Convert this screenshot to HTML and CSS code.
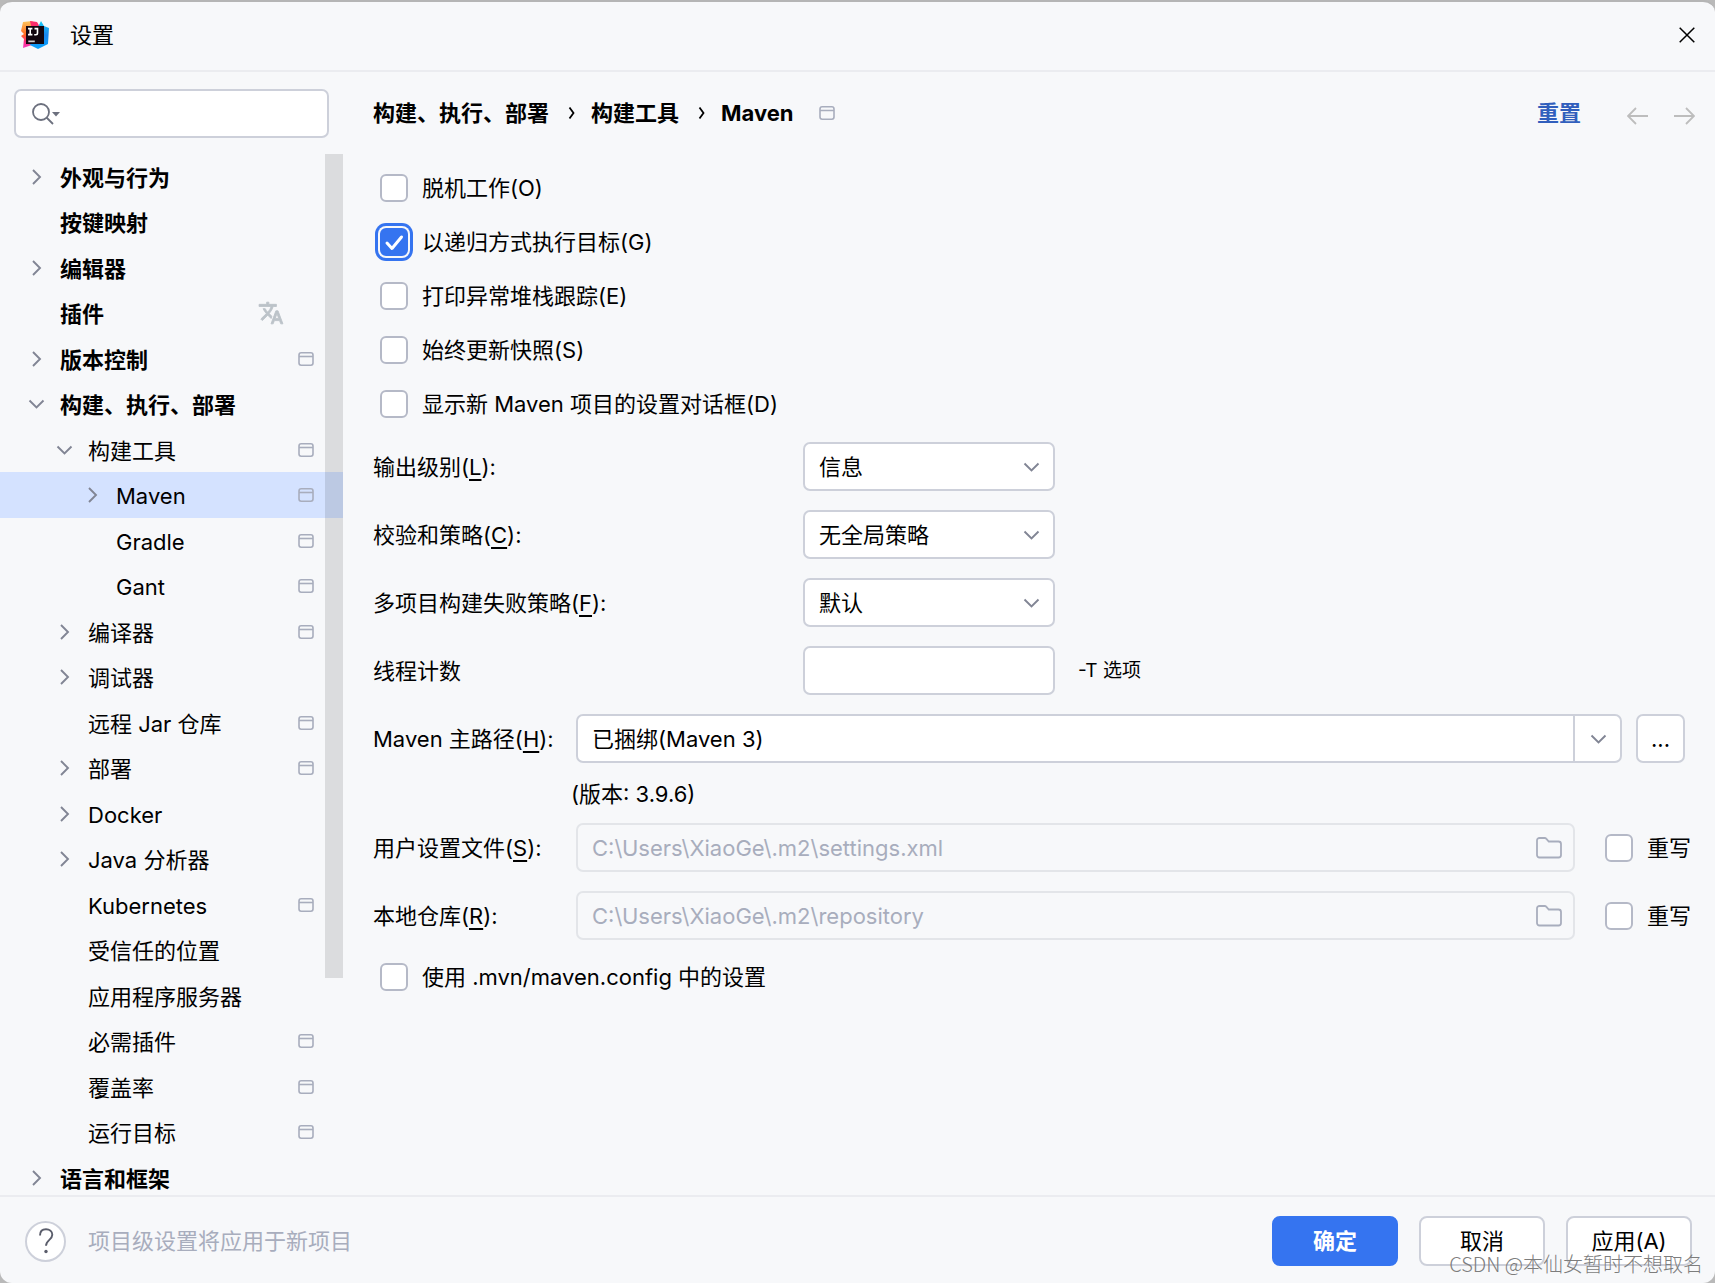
FILE: index.html
```html
<!DOCTYPE html>
<html lang="zh-CN">
<head>
<meta charset="utf-8">
<title>设置</title>
<link rel="stylesheet" href="styles.css">
</head>
<body>
<svg class="sprite" aria-hidden="true">
  <symbol id="right" viewBox="0 0 24 24"><path d="M9 5l7 7-7 7" fill="none" stroke="currentColor" stroke-width="1.900"/></symbol>
  <symbol id="down" viewBox="0 0 24 24"><path d="M5.500 8.500l7 7 7-7" fill="none" stroke="currentColor" stroke-width="1.900"/></symbol>
  <symbol id="project" viewBox="0 0 16 16"><rect x="1" y="1.700" width="14" height="12.600" rx="2.200" fill="none" stroke="currentColor" stroke-width="1.600"/><path d="M1 5.500h14" stroke="currentColor" stroke-width="1.600"/></symbol>
  <symbol id="folder" viewBox="0 0 26 22"><path d="M1 3.500a2.500 2.500 0 0 1 2.500-2.500h5.200a2 2 0 0 1 1.500.700L12.800 4.500h9.700A2.500 2.500 0 0 1 25 7v11a2.500 2.500 0 0 1-2.500 2.500h-19A2.500 2.500 0 0 1 1 18z" fill="none" stroke="currentColor" stroke-width="1.800"/></symbol>
  <symbol id="crumb" viewBox="0 0 8 14"><path d="M1.500 1.500l4 5.500-4 5.500" fill="none" stroke="currentColor" stroke-width="1.800"/></symbol>
</svg>
<div class="dialog">
  <header class="titlebar">
    <svg class="logo" viewBox="0 0 28 28" aria-hidden="true">
      <defs>
        <linearGradient id="warm" x1="0" y1="0" x2="0" y2="1"><stop offset="0" stop-color="#fdc65e"/><stop offset=".5" stop-color="#ff6a1f"/><stop offset=".75" stop-color="#fe2b7c"/><stop offset="1" stop-color="#f03fc0"/></linearGradient>
        <linearGradient id="cool" x1="0" y1="0" x2="0" y2="1"><stop offset="0" stop-color="#18cdf5"/><stop offset=".5" stop-color="#1a86f0"/><stop offset="1" stop-color="#08a2fb"/></linearGradient>
      </defs>
      <path d="M2 1l9-1 6 5v17L2 27l1-9-3-3 3-2-3-3z" fill="url(#warm)"/>
      <path d="M9 0l7 1 3 5-8 4z" fill="#fb2c6b"/>
      <path d="M20 0l3 5 5 2-1 16-10 5-8-4 8-18z" fill="url(#cool)"/>
      <rect x="5" y="5" width="18" height="18" fill="#12060f"/>
      <path d="M7 7.600h4.400M9.200 7.600v6M7 13.600h4.400M13.500 7.600h3v4.400q0 1.700-1.700 1.700h-1.600" fill="none" stroke="#fff" stroke-width="1.600"/>
      <path d="M7.300 20.300h6.500" stroke="#ccc" stroke-width="1.700"/>
    </svg>
    <h1 class="title">设置</h1>
    <button class="close" aria-label="关闭"><svg viewBox="0 0 16 16"><path d="M.7.700l14.600 14.600M15.300.700L.7 15.300" stroke="#000" stroke-width="1.500"/></svg></button>
  </header>

  <div class="body">
    <aside class="sidebar">
      <label class="search">
        <svg viewBox="0 0 28 22" aria-hidden="true"><circle cx="9" cy="9" r="8" fill="none" stroke="#6c707e" stroke-width="1.800"/><path d="M14.500 14.500l6.500 6.500" stroke="#6c707e" stroke-width="1.800"/><path d="M20 9h8l-4 4.500z" fill="#6c707e"/></svg>
        <input type="text" aria-label="搜索设置">
      </label>
      <nav class="tree-area" aria-label="设置分类">
        <ul class="tree">
          <li class="row top"><svg class="arrow"><use href="#right"/></svg><span class="name">外观与行为</span></li>
          <li class="row top"><span class="arrow"></span><span class="name">按键映射</span></li>
          <li class="row top"><svg class="arrow"><use href="#right"/></svg><span class="name">编辑器</span></li>
          <li class="row top"><span class="arrow"></span><span class="name">插件</span><svg class="translate" viewBox="0 0 24 24"><path d="M12.870 15.070l-2.540-2.510.03-.03A17.520 17.520 0 0 0 14.070 6H17V4h-7V2H8v2H1v1.990h11.170C11.500 7.920 10.440 9.750 9 11.350 8.070 10.320 7.300 9.190 6.690 8h-2c.73 1.630 1.730 3.170 2.980 4.560l-5.090 5.020L4 19l5-5 3.110 3.110.76-2.040zM18.500 10h-2L12 22h2l1.120-3h4.750L21 22h2l-4.500-12zm-2.620 7l1.620-4.330L19.120 17h-3.240z" fill="currentColor" stroke="currentColor" stroke-width=".8"/></svg></li>
          <li class="row top"><svg class="arrow"><use href="#right"/></svg><span class="name">版本控制</span><svg class="project"><use href="#project"/></svg></li>
          <li class="row top"><svg class="arrow"><use href="#down"/></svg><span class="name">构建、执行、部署</span></li>
          <li class="row child"><svg class="arrow"><use href="#down"/></svg><span class="name">构建工具</span><svg class="project"><use href="#project"/></svg></li>
          <li class="row leaf selected"><svg class="arrow"><use href="#right"/></svg><span class="name">Maven</span><svg class="project"><use href="#project"/></svg></li>
          <li class="row leaf"><span class="arrow"></span><span class="name">Gradle</span><svg class="project"><use href="#project"/></svg></li>
          <li class="row leaf"><span class="arrow"></span><span class="name">Gant</span><svg class="project"><use href="#project"/></svg></li>
          <li class="row child"><svg class="arrow"><use href="#right"/></svg><span class="name">编译器</span><svg class="project"><use href="#project"/></svg></li>
          <li class="row child"><svg class="arrow"><use href="#right"/></svg><span class="name">调试器</span></li>
          <li class="row child"><span class="arrow"></span><span class="name">远程 Jar 仓库</span><svg class="project"><use href="#project"/></svg></li>
          <li class="row child"><svg class="arrow"><use href="#right"/></svg><span class="name">部署</span><svg class="project"><use href="#project"/></svg></li>
          <li class="row child"><svg class="arrow"><use href="#right"/></svg><span class="name">Docker</span></li>
          <li class="row child"><svg class="arrow"><use href="#right"/></svg><span class="name">Java 分析器</span></li>
          <li class="row child"><span class="arrow"></span><span class="name">Kubernetes</span><svg class="project"><use href="#project"/></svg></li>
          <li class="row child"><span class="arrow"></span><span class="name">受信任的位置</span></li>
          <li class="row child"><span class="arrow"></span><span class="name">应用程序服务器</span></li>
          <li class="row child"><span class="arrow"></span><span class="name">必需插件</span><svg class="project"><use href="#project"/></svg></li>
          <li class="row child"><span class="arrow"></span><span class="name">覆盖率</span><svg class="project"><use href="#project"/></svg></li>
          <li class="row child"><span class="arrow"></span><span class="name">运行目标</span><svg class="project"><use href="#project"/></svg></li>
          <li class="row top"><svg class="arrow"><use href="#right"/></svg><span class="name">语言和框架</span></li>
        </ul>
        <div class="thumb"></div>
      </nav>
    </aside>

    <main class="panel">
      <div class="heading">
        <h2 class="crumbs"><span>构建、执行、部署</span><svg class="crumb"><use href="#crumb"/></svg><span>构建工具</span><svg class="crumb"><use href="#crumb"/></svg><span>Maven</span></h2>
        <svg class="project"><use href="#project"/></svg>
        <a class="reset" href="#">重置</a>
        <div class="history">
          <button aria-label="后退"><svg viewBox="0 0 22 18"><path d="M21 9H1.500M9 1L1 9l8 8" fill="none" stroke="currentColor" stroke-width="1.800"/></svg></button>
          <button aria-label="前进"><svg viewBox="0 0 22 18"><path d="M1 9h19.500M13 1l8 8-8 8" fill="none" stroke="currentColor" stroke-width="1.800"/></svg></button>
        </div>
      </div>

      <div class="checks">
        <label class="check"><input type="checkbox"><span>脱机工作(O)</span></label>
        <label class="check"><span class="tick focused"><input type="checkbox" checked><svg viewBox="0 0 28 28" aria-hidden="true"><path d="M7 15l5 5.500L21.500 9" fill="none" stroke="#fff" stroke-width="3" stroke-linecap="round" stroke-linejoin="round"/></svg></span><span>以递归方式执行目标(G)</span></label>
        <label class="check"><input type="checkbox"><span>打印异常堆栈跟踪(E)</span></label>
        <label class="check"><input type="checkbox"><span>始终更新快照(S)</span></label>
        <label class="check"><input type="checkbox"><span>显示新 Maven 项目的设置对话框(D)</span></label>
      </div>

      <div class="options">
        <label for="level">输出级别(<u>L</u>):</label>
        <div class="select"><select id="level"><option>信息</option></select><svg><use href="#down"/></svg></div>
        <label for="checksum">校验和策略(<u>C</u>):</label>
        <div class="select"><select id="checksum"><option>无全局策略</option></select><svg><use href="#down"/></svg></div>
        <label for="fail">多项目构建失败策略(<u>F</u>):</label>
        <div class="select"><select id="fail"><option>默认</option></select><svg><use href="#down"/></svg></div>
        <label for="threads">线程计数</label>
        <div class="threads"><input class="text" id="threads" type="text"><span class="hint">-T 选项</span></div>
      </div>

      <div class="paths">
        <label for="home">Maven 主路径(<u>H</u>):</label>
        <div class="home">
          <div class="combo"><input id="home" type="text" value="已捆绑(Maven 3)"><button aria-label="展开"><svg><use href="#down"/></svg></button></div>
          <button class="browse" aria-label="浏览">...</button>
        </div>
        <p class="version">(版本: 3.9.6)</p>
        <label for="user">用户设置文件(<u>S</u>):</label>
        <div class="file">
          <div class="field"><input id="user" type="text" value="C:\Users\XiaoGe\.m2\settings.xml" disabled><svg><use href="#folder"/></svg></div>
          <label class="check"><input type="checkbox"><span>重写</span></label>
        </div>
        <label for="repo">本地仓库(<u>R</u>):</label>
        <div class="file">
          <div class="field"><input id="repo" type="text" value="C:\Users\XiaoGe\.m2\repository" disabled><svg><use href="#folder"/></svg></div>
          <label class="check"><input type="checkbox"><span>重写</span></label>
        </div>
      </div>

      <div class="config"><label class="check"><input type="checkbox"><span>使用 .mvn/maven.config 中的设置</span></label></div>
    </main>
  </div>

  <footer class="footer">
    <button class="help" aria-label="帮助"><svg viewBox="0 0 16 26"><path d="M2 7.500C2 3.500 4.500 1.200 8 1.200s6.300 2.300 6.300 5.600c0 5-6.300 5.200-6.300 11" fill="none" stroke="#5a5d6b" stroke-width="1.900"/><circle cx="8" cy="23.500" r="1.700" fill="#5a5d6b"/></svg></button>
    <p class="note">项目级设置将应用于新项目</p>
    <div class="actions">
      <button class="btn primary">确定</button>
      <button class="btn">取消</button>
      <button class="btn">应用(A)</button>
    </div>
  </footer>
  <div class="watermark">CSDN @本仙女暂时不想取名</div>
</div>
</body>
</html>
```

FILE: styles.css
```css
* { box-sizing: border-box; }

body {
  margin: 0;
  background: #b9b9b9;
  color: #000;
  font: 22px/32px Inter, "Noto Sans CJK SC", sans-serif;
}

button, input, select { font: inherit; color: inherit; margin: 0; }
button { padding: 0; border: 0; background: none; }
svg { display: block; flex: none; }
h1, h2, p, ul { margin: 0; padding: 0; font-size: inherit; }
u { text-decoration-thickness: 2px; text-underline-offset: 4px; text-decoration-skip-ink: none; }

.sprite { position: absolute; width: 0; height: 0; }

.dialog {
  position: relative;
  display: flex;
  flex-direction: column;
  height: 100vh;
  overflow: hidden;
  border-top: 2px solid #b5b5b5;
  border-radius: 12px;
  background: #f7f8fa;
}

/* Title bar */
.titlebar {
  display: flex;
  align-items: center;
  flex: none;
  height: 70px;
  padding: 0 20px 2px 21px;
  border-bottom: 2px solid #ebecf0;
}
.logo { width: 28px; height: 28px; }
.title { margin-left: 21px; font-weight: 400; }
.close { margin-left: auto; }
.close svg { width: 16px; height: 16px; }

.body { display: flex; flex: 1; min-height: 0; }

/* Sidebar */
.sidebar { display: flex; flex-direction: column; flex: none; width: 343px; padding-top: 17px; }
.search {
  display: flex;
  align-items: center;
  flex: none;
  gap: 8px;
  height: 49px;
  margin: 0 14px;
  padding: 0 16px;
  border: 2px solid #cdd0da;
  border-radius: 7px;
  background: #fff;
}
.search svg { width: 28px; height: 22px; }
.search input { flex: 1; min-width: 0; border: 0; outline: 0; background: none; }

.tree-area { position: relative; flex: 1; min-height: 0; margin-top: 16px; overflow: hidden; }
.tree { display: grid; grid-auto-rows: 45px 46px; list-style: none; }
.row { display: flex; align-items: center; gap: 12px; padding: 0 29px 0 24px; }
.row.top { font-weight: 700; }
.row.child { padding-left: 52px; }
.row.leaf { padding-left: 80px; }
.row.selected { background: #d4e2ff; }
.arrow { width: 24px; height: 24px; color: #818594; }
.name { flex: 1; padding-top: 2px; white-space: nowrap; }
.project { width: 16px; height: 16px; color: #a8adbd; }
.translate { width: 26px; height: 26px; margin-right: 30px; color: #bcc3c9; }
.thumb { position: absolute; top: 0; right: 0; width: 18px; height: 824px; background: rgba(0, 0, 0, .11); }

/* Settings panel */
.panel { flex: 1; min-width: 0; padding: 25px 24px 0 30px; }
.heading { display: flex; align-items: center; height: 32px; margin-right: -4px; }
.crumbs { display: flex; align-items: center; gap: 15px; margin-right: 25px; font-weight: 700; }
.crumb { width: 8px; height: 14px; margin-left: 4px; }
.reset { margin-left: auto; color: #315fbd; font-weight: 700; text-decoration: none; }
.history { display: flex; gap: 24px; margin-left: 46px; padding-top: 5px; color: #bdbdbd; }
.history svg { width: 22px; height: 18px; }

.check { display: flex; align-items: center; gap: 14px; white-space: nowrap; }
input[type="checkbox"] {
  appearance: none;
  flex: none;
  width: 28px;
  height: 28px;
  border: 2px solid #b5b9c7;
  border-radius: 6px;
  background: #fff;
}
input[type="checkbox"]:checked { border-color: #3574f0; background: #3574f0; }
.tick { display: grid; flex: none; }
.tick > * { grid-area: 1 / 1; }
.tick svg { width: 28px; height: 28px; }
.focused input { box-shadow: 0 0 0 2px #f7f8fa, 0 0 0 5px #3574f0; }
.checks { display: grid; grid-auto-rows: 54px; margin-top: 32px; padding-left: 7px; }

.options { display: grid; grid-template-columns: 430px 1fr; align-items: center; row-gap: 19px; margin-top: 11px; }
.select { display: grid; align-items: center; justify-items: end; width: 252px; }
.select > * { grid-area: 1 / 1; }
.select select, .text {
  appearance: none;
  width: 252px;
  height: 49px;
  padding: 0 14px;
  border: 2px solid #cdd0da;
  border-radius: 7px;
  background: #fff;
}
.select svg { width: 24px; height: 24px; margin-right: 12px; color: #818594; pointer-events: none; }
.threads { display: flex; align-items: center; gap: 23px; }
.hint { font-size: 19px; }

.paths { display: grid; grid-template-columns: 203px 1fr; align-items: center; row-gap: 19px; margin-top: 19px; }
.home { display: flex; gap: 14px; padding-right: 6px; }
.combo, .field {
  display: flex;
  flex: 1;
  min-width: 0;
  height: 49px;
  border: 2px solid #cdd0da;
  border-radius: 7px;
  background: #fff;
}
.combo input, .field input { flex: 1; min-width: 0; padding: 0 14px; border: 0; background: none; }
.combo button { display: grid; place-items: center; width: 47px; border-left: 2px solid #cdd0da; color: #818594; }
.combo svg { width: 24px; height: 24px; }
.browse { width: 49px; height: 49px; border: 2px solid #cdd0da; border-radius: 7px; background: #fff; }
.version { grid-column: 2; height: 22px; margin-left: -5px; line-height: 24px; }
.file { display: flex; align-items: center; gap: 30px; }
.field { align-items: center; padding-right: 11px; border-color: #e3e5e9; background: none; color: #a8adbd; }
.field svg { width: 26px; height: 22px; }
.config { margin-top: 21px; padding-left: 7px; }

/* Footer */
.footer {
  display: flex;
  align-items: center;
  flex: none;
  gap: 22px;
  height: 88px;
  padding: 2px 23px 0 25px;
  border-top: 2px solid #ebecf0;
}
.help { display: grid; place-items: center; width: 41px; height: 41px; border: 2px solid #cdd0da; border-radius: 50%; background: #fff; }
.help svg { width: 16px; height: 26px; }
.note { flex: 1; color: #a8adbd; }
.actions { display: flex; gap: 21px; }
.btn { width: 126px; height: 50px; border: 2px solid #cdd0da; border-radius: 8px; background: #fff; }
.btn.primary { border-color: #3574f0; background: #3574f0; color: #fff; font-weight: 700; }

.watermark {
  position: absolute;
  right: 12px;
  bottom: 4px;
  color: #7d7d7d;
  font: 300 20px/30px "Noto Sans CJK SC", sans-serif;
  pointer-events: none;
}
```
